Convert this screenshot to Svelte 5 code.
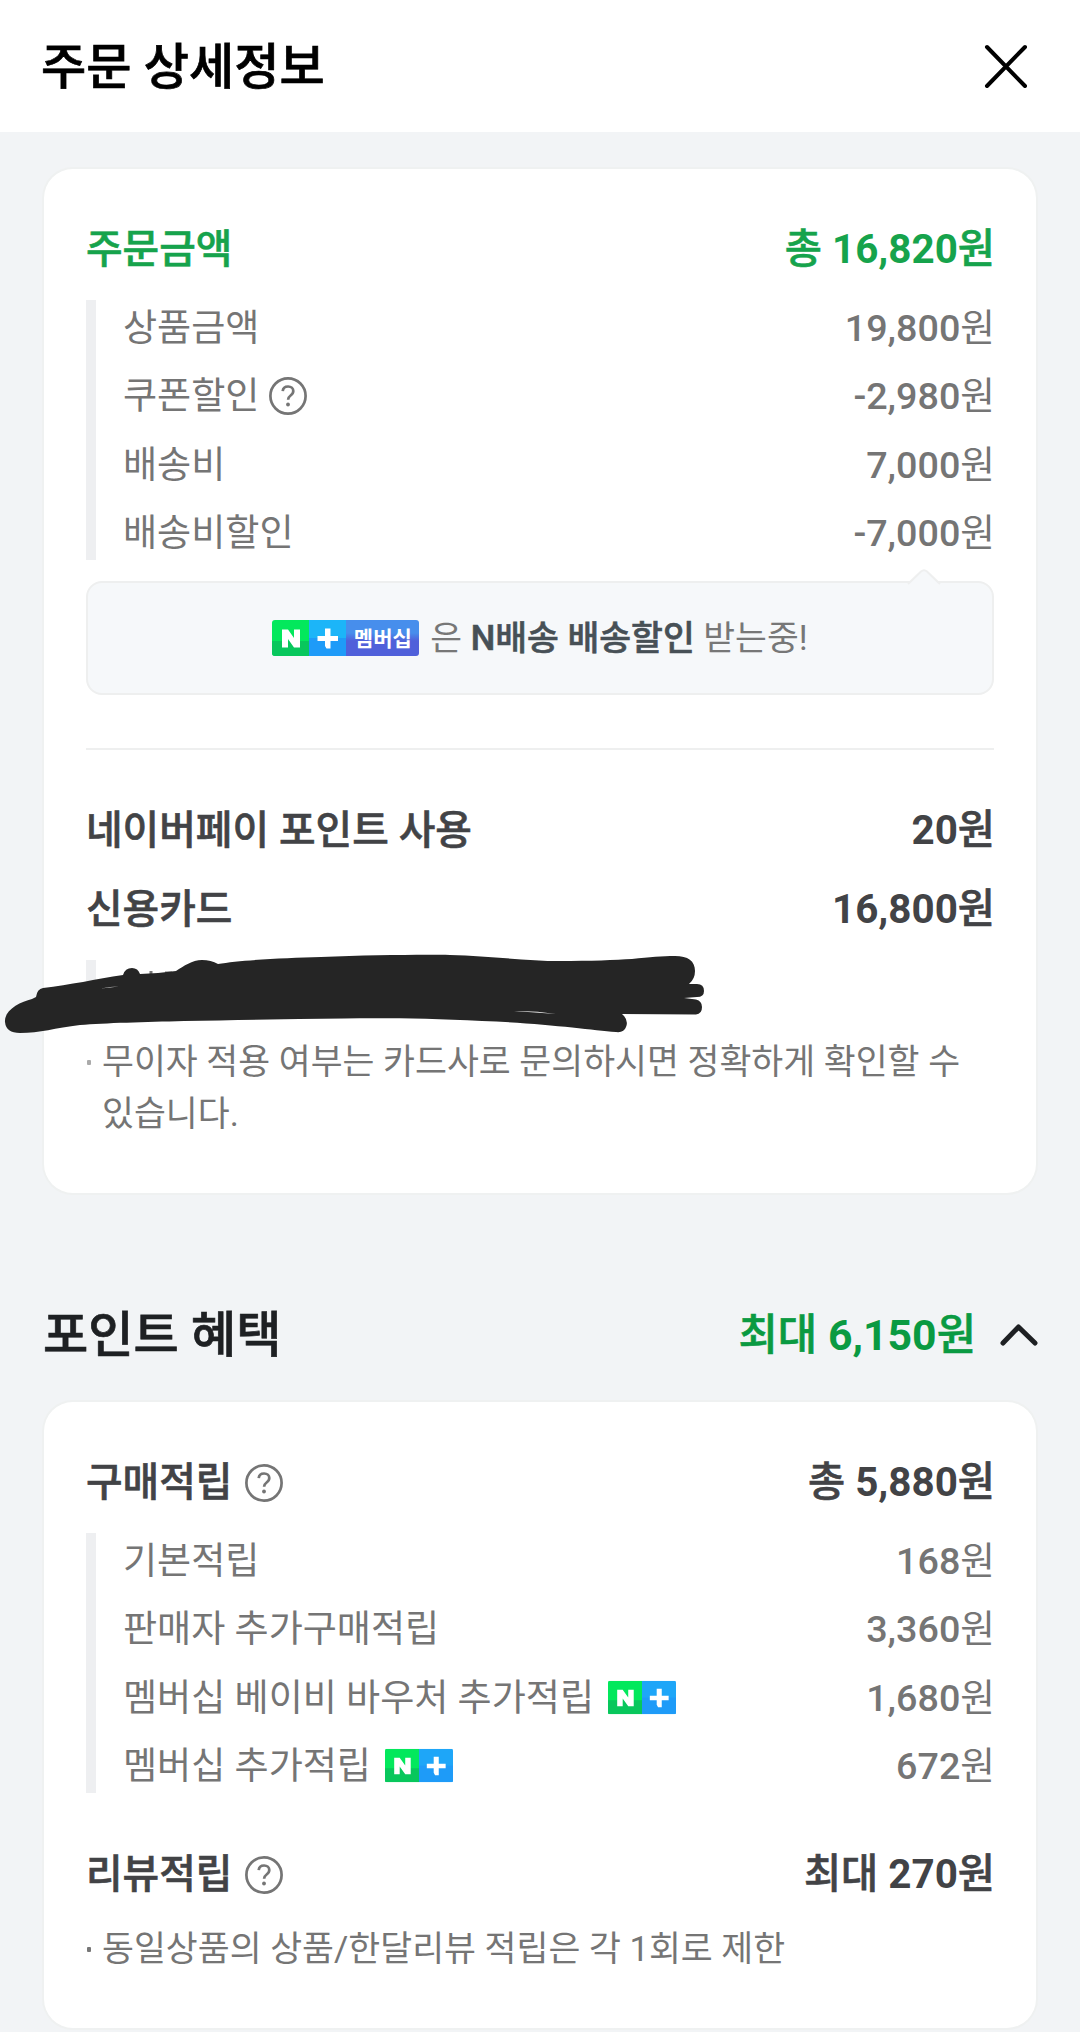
<script>
  const orderRows = [
    { label: '상품금액', amount: '19,800' },
    { label: '쿠폰할인', amount: '-2,980', help: true },
    { label: '배송비', amount: '7,000' },
    { label: '배송비할인', amount: '-7,000' },
  ];
  const pointRows = [
    { label: '기본적립', amount: '168' },
    { label: '판매자 추가구매적립', amount: '3,360' },
    { label: '멤버십 베이비 바우처 추가적립', amount: '1,680', plus: true },
    { label: '멤버십 추가적립', amount: '672', plus: true },
  ];
</script>

{#snippet money(amount, prefix)}
  <span class="money">{#if prefix}{prefix}&nbsp;{/if}<b>{amount}</b>원</span>
{/snippet}

{#snippet helpIcon()}
  <svg class="help" viewBox="0 0 38 38" role="img" aria-label="도움말">
    <circle cx="19" cy="19" r="17.6" />
    <path d="M13.7 14.2c.3-3 2.5-4.7 5.4-4.7 3 0 5.2 1.9 5.2 4.6 0 2.100-1.100 3.300-2.700 4.400-1.800 1.300-2.500 2.100-2.500 4.300" />
    <circle class="dot" cx="19" cy="27.500" r="1.900" />
  </svg>
{/snippet}

{#snippet nMark()}
  <svg class="cell" viewBox="0 0 37 36">
    <rect class="green-top" width="37" height="36" />
    <rect class="green-bottom" y="21" width="37" height="15" />
    <path class="white" d="M10 9.500h6l6 8.500v-8.500h6v18h-6l-6-8.500v8.500h-6z" />
  </svg>
{/snippet}

{#snippet plusMark()}
  <svg class="cell" viewBox="0 0 37 36">
    <rect class="sky-top" width="37" height="36" />
    <rect class="sky-bottom" y="18" width="37" height="18" />
    <path class="white" d="M16 8.500h5.500v7.500h7.500v5h-7.500v7.500h-4l-1.500-2.500v-5h-7.500v-5h7.500z" />
  </svg>
{/snippet}

{#snippet details(rows)}
  <ul class="details">
    {#each rows as row}
      <li>
        <span class="label">
          {row.label}
          {#if row.help}{@render helpIcon()}{/if}
          {#if row.plus}
            <span class="badge mini">{@render nMark()}{@render plusMark()}</span>
          {/if}
        </span>
        {@render money(row.amount)}
      </li>
    {/each}
  </ul>
{/snippet}

<main>
  <header>
    <h1>주문 상세정보</h1>
    <svg class="close" viewBox="0 0 44 44" role="img" aria-label="닫기">
      <path d="M3 3l38 39M41 3L3 42" />
    </svg>
  </header>

  <section class="card">
    <div class="row green"><span class="label">주문금액</span>{@render money('16,820', '총')}</div>
    {@render details(orderRows)}

    <div class="callout">
      <svg class="tip" viewBox="0 0 34 16"><path d="M1 15L14 2.500q3-2.500 6 0L33 15" /></svg>
      <span class="badge">{@render nMark()}{@render plusMark()}<span class="member">멤버십</span></span>
      <span class="message">은 <strong>N배송 배송할인</strong> 받는중!</span>
    </div>

    <hr />

    <div class="row points"><span class="label">네이버페이 포인트 사용</span>{@render money('20')}</div>
    <div class="row card-pay"><span class="label">신용카드</span>{@render money('16,800')}</div>
    <div class="masked">
      <svg class="scribble" viewBox="0 950 720 90">
        <path class="trace" d="M151 971v8M158 975h3M165 973h7" />
        <path
          class="ink"
          d="M5 1022C4 1010 20 1002 32 999L36 997Q37 989 43 988C70 985 96 979 123 975Q125 968 132 968Q138 968 140 974L158 973L176 971C184 966 192 960 202 960Q211 960 218 964C240 960 285 958 321 957C370 955 425 954.500 450 955C490 956 527 961 560 961C590 961 616 960 632 959C650 957 662 956 675 956C688 956 695 961 695 971Q695 979 689 984L697 984Q704 984 704 991Q704 997 697 997L684 998L696 999.500Q702 1001 702 1007Q702 1014 696 1014.500L622 1014Q629 1020 626 1027Q624 1033 616 1032C590 1030 545 1023 482 1021C430 1018.500 390 1018 344 1018.500C290 1019 235 1020 184 1021C145 1022 105 1023 80 1025C55 1028 40 1033 20 1033Q6 1033 5 1022Z"
        />
        <path class="gap" d="M101 988.500Q110 986.500 119 986.500Q110 987.500 101 988.500ZM514 1011Q535 1010.500 556 1014Q535 1012.500 514 1011Z" />
      </svg>
    </div>
    <p class="note"><i></i>무이자 적용 여부는 카드사로 문의하시면 정확하게 확인할 수 있습니다.</p>
  </section>

  <div class="section-head">
    <h2>포인트 혜택</h2>
    <div class="total">
      {@render money('6,150', '최대')}
      <svg class="chevron" viewBox="0 0 38 24"><path d="M3 20L18.500 4L35 20" /></svg>
    </div>
  </div>

  <section class="card">
    <div class="row"><span class="label">구매적립{@render helpIcon()}</span>{@render money('5,880', '총')}</div>
    {@render details(pointRows)}
    <div class="row review"><span class="label">리뷰적립{@render helpIcon()}</span>{@render money('270', '최대')}</div>
    <p class="note last"><i class="dark"></i>동일상품의 상품/한달리뷰 적립은 각 1회로 제한</p>
  </section>
</main>

<style>
  :global(body) {
    margin: 0;
    background: #f2f4f6;
  }
  main {
    box-sizing: border-box;
    width: 1080px;
    height: 2032px;
    overflow: hidden;
    background: #f2f4f6;
    font-family: Roboto, 'Noto Sans CJK KR', sans-serif;
    color: #424346;
  }
  header {
    display: flex;
    align-items: center;
    justify-content: space-between;
    box-sizing: border-box;
    height: 132px;
    padding: 0 52px 0 41px;
    background: #fff;
  }
  h1, h2 {
    margin: 0;
    font-size: 49.2px;
    font-weight: 500;
    line-height: 60px;
    color: #000;
    -webkit-text-stroke: 0.7px currentColor;
  }
  h1 {
    padding-top: 2px;
  }
  h2 {
    padding: 1px 0 0 1px;
    color: #1e2023;
  }
  .close {
    width: 44px;
    height: 44px;
    fill: none;
    stroke: #000;
    stroke-width: 4;
    stroke-linecap: round;
  }
  .card {
    box-sizing: border-box;
    margin: 37px 44px 0;
    padding: 50px 42px 53px;
    border-radius: 29px;
    background: #fff;
    box-shadow: 0 0 0 2px #eff1f1;
  }
  .row, .details li {
    display: flex;
    align-items: center;
    justify-content: space-between;
    white-space: nowrap;
  }
  .row {
    height: 60px;
    font-size: 39.8px;
    font-weight: 500;
    line-height: 64px;
    -webkit-text-stroke: 0.6px currentColor;
  }
  .row .label,
  .row .money {
    padding-top: 2px;
  }
  .row .money {
    margin-right: -1px;
    font-size: 40.4px;
  }
  .row b {
    font-weight: 700;
    -webkit-text-stroke: 0;
  }
  .green {
    color: #16a34c;
  }
  .label {
    display: flex;
    align-items: center;
  }
  .help {
    flex: none;
    width: 38px;
    height: 38px;
    margin: 0 0 0 10px;
    fill: none;
    stroke: #757575;
    stroke-width: 2.7;
  }
  .row .help {
    margin-left: 13px;
  }
  .help .dot {
    fill: #757575;
    stroke: none;
  }
  .details {
    display: flex;
    flex-direction: column;
    justify-content: space-between;
    box-sizing: border-box;
    height: 260px;
    margin: 21px 0 0;
    padding: 0 0 0 27px;
    border-left: 10px solid #eeeff1;
    list-style: none;
    color: #757575;
    font-size: 37.1px;
  }
  .details li {
    height: 55px;
    line-height: 55px;
  }
  .details .label,
  .details .money {
    padding-top: 2px;
  }
  .details .money {
    margin-right: -1px;
    font-size: 37.7px;
  }
  .details b {
    font-weight: 500;
  }
  .details .help {
    margin-top: -1px;
  }
  .badge {
    display: inline-flex;
    flex: none;
    height: 36px;
    border-radius: 3px;
    overflow: hidden;
  }
  .cell {
    width: 37px;
    height: 36px;
  }
  .mini {
    height: 35px;
    margin: -2px 0 0 14px;
  }
  .mini .cell {
    width: 34px;
    height: 35px;
  }
  .green-top { fill: #03e85c; }
  .green-bottom { fill: #08c75c; }
  .sky-top { fill: #1cb5f8; }
  .sky-bottom { fill: #1e9bf8; }
  .mini .sky-top { fill: #1ea6f8; }
  .white { fill: #fff; }
  .member {
    width: 73px;
    background: linear-gradient(#478eec 0 36%, #5060da 58%);
    color: #fff;
    font-size: 21px;
    font-weight: 700;
    line-height: 38px;
    text-align: center;
  }
  .callout {
    position: relative;
    display: flex;
    align-items: center;
    justify-content: center;
    box-sizing: border-box;
    height: 114px;
    margin-top: 21px;
    border: 2px solid #eeefef;
    border-radius: 16px;
    background: #f6f8fa;
    color: #777;
    font-size: 34.6px;
    line-height: 50px;
  }
  .tip {
    position: absolute;
    top: -14px;
    right: 51px;
    width: 34px;
    height: 16px;
    fill: #f6f8fa;
    stroke: #eeefef;
    stroke-width: 2;
  }
  .message {
    margin-left: 11px;
    white-space: nowrap;
  }
  strong {
    color: #475056;
    font-weight: 500;
    -webkit-text-stroke: 0.6px currentColor;
  }
  hr {
    height: 2px;
    margin: 53px 0 0;
    border: 0;
    background: #eeefef;
  }
  .points {
    margin-top: 50px;
  }
  .card-pay {
    margin-top: 19px;
  }
  .masked {
    position: relative;
    height: 52px;
    margin-top: 21px;
    border-left: 10px solid #eeeff1;
  }
  .scribble {
    position: absolute;
    top: -10px;
    left: -96px;
    width: 720px;
    height: 90px;
  }
  .ink { fill: #252525; }
  .gap { fill: #eee; }
  .trace {
    fill: none;
    stroke: #757575;
    stroke-width: 3;
  }
  .note {
    position: relative;
    margin: 24px 0 0;
    padding-left: 16px;
    color: #757575;
    font-size: 34.7px;
    line-height: 52px;
    word-break: keep-all;
  }
  .note i {
    position: absolute;
    top: 24px;
    left: 1px;
    width: 4px;
    height: 5px;
    border-radius: 1px;
    background: #aaa;
  }
  .note .dark {
    background: #777;
  }
  .section-head {
    display: flex;
    align-items: center;
    justify-content: space-between;
    height: 60px;
    margin: 111px 42px 0;
  }
  .section-head + .card {
    margin-top: 38px;
  }
  .total {
    display: flex;
    align-items: center;
    gap: 24px;
    padding-top: 2px;
    color: #0a9a42;
    font-size: 42.800px;
    font-weight: 500;
    line-height: 60px;
    -webkit-text-stroke: 0.6px currentColor;
  }
  .total b {
    font-weight: 700;
    -webkit-text-stroke: 0;
  }
  .chevron {
    width: 38px;
    height: 24px;
    fill: none;
    stroke: #1e2023;
    stroke-width: 5;
    stroke-linecap: round;
    stroke-linejoin: round;
  }
  .review {
    margin-top: 51px;
  }
  .last {
    margin-top: 19px;
  }
</style>
